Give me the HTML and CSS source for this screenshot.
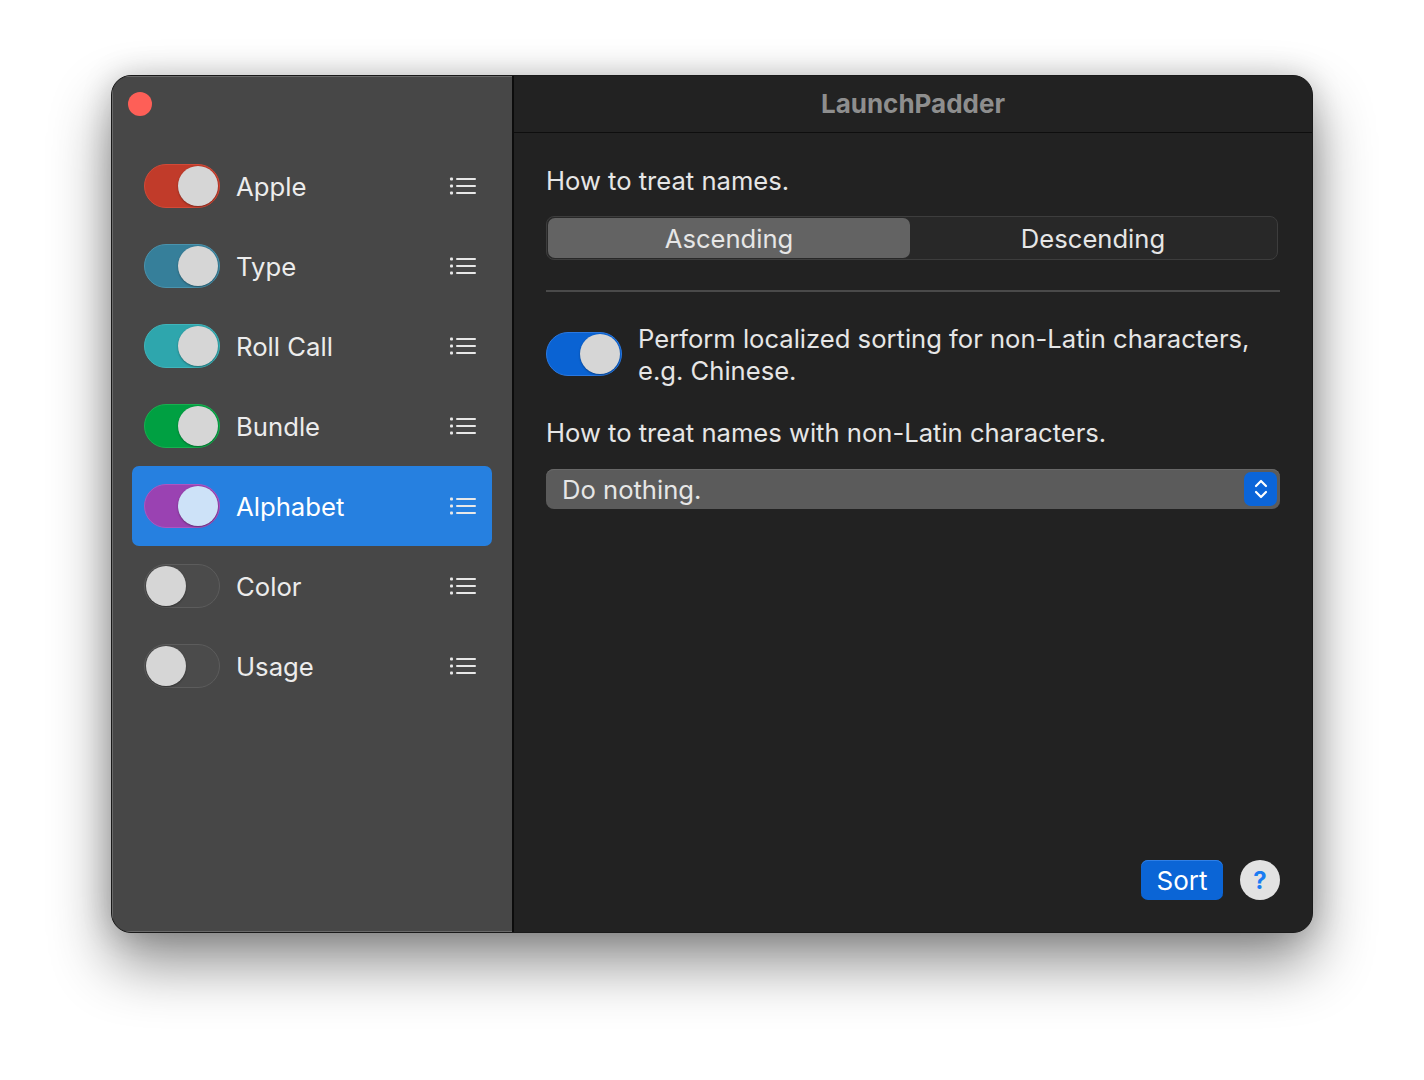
FILE: index.html
```html
<!DOCTYPE html>
<html>
<head>
<meta charset="utf-8">
<link rel="stylesheet" href="styles.css">
</head>
<body>
<div class="window">
  <aside class="sidebar">
    <div class="sidebar-top"><span class="close"></span></div>
    <div class="row">
      <span class="toggle on red"><span class="knob"></span></span>
      <span class="label">Apple</span>
      <svg class="list" viewBox="0 0 28 20"><g fill="currentColor"><rect x="1" y="1.5" width="3" height="3" rx="1"/><rect x="1" y="8.5" width="3" height="3" rx="1"/><rect x="1" y="15.5" width="3" height="3" rx="1"/><rect x="7" y="2" width="20" height="2" rx="1"/><rect x="7" y="9" width="20" height="2" rx="1"/><rect x="7" y="16" width="20" height="2" rx="1"/></g></svg>
    </div>
    <div class="row">
      <span class="toggle on teal"><span class="knob"></span></span>
      <span class="label">Type</span>
      <svg class="list" viewBox="0 0 28 20"><g fill="currentColor"><rect x="1" y="1.5" width="3" height="3" rx="1"/><rect x="1" y="8.5" width="3" height="3" rx="1"/><rect x="1" y="15.5" width="3" height="3" rx="1"/><rect x="7" y="2" width="20" height="2" rx="1"/><rect x="7" y="9" width="20" height="2" rx="1"/><rect x="7" y="16" width="20" height="2" rx="1"/></g></svg>
    </div>
    <div class="row">
      <span class="toggle on cyan"><span class="knob"></span></span>
      <span class="label">Roll Call</span>
      <svg class="list" viewBox="0 0 28 20"><g fill="currentColor"><rect x="1" y="1.5" width="3" height="3" rx="1"/><rect x="1" y="8.5" width="3" height="3" rx="1"/><rect x="1" y="15.5" width="3" height="3" rx="1"/><rect x="7" y="2" width="20" height="2" rx="1"/><rect x="7" y="9" width="20" height="2" rx="1"/><rect x="7" y="16" width="20" height="2" rx="1"/></g></svg>
    </div>
    <div class="row">
      <span class="toggle on green"><span class="knob"></span></span>
      <span class="label">Bundle</span>
      <svg class="list" viewBox="0 0 28 20"><g fill="currentColor"><rect x="1" y="1.5" width="3" height="3" rx="1"/><rect x="1" y="8.5" width="3" height="3" rx="1"/><rect x="1" y="15.5" width="3" height="3" rx="1"/><rect x="7" y="2" width="20" height="2" rx="1"/><rect x="7" y="9" width="20" height="2" rx="1"/><rect x="7" y="16" width="20" height="2" rx="1"/></g></svg>
    </div>
    <div class="row selected">
      <span class="toggle on purple"><span class="knob"></span></span>
      <span class="label">Alphabet</span>
      <svg class="list" viewBox="0 0 28 20"><g fill="currentColor"><rect x="1" y="1.5" width="3" height="3" rx="1"/><rect x="1" y="8.5" width="3" height="3" rx="1"/><rect x="1" y="15.5" width="3" height="3" rx="1"/><rect x="7" y="2" width="20" height="2" rx="1"/><rect x="7" y="9" width="20" height="2" rx="1"/><rect x="7" y="16" width="20" height="2" rx="1"/></g></svg>
    </div>
    <div class="row">
      <span class="toggle off"><span class="knob"></span></span>
      <span class="label">Color</span>
      <svg class="list" viewBox="0 0 28 20"><g fill="currentColor"><rect x="1" y="1.5" width="3" height="3" rx="1"/><rect x="1" y="8.5" width="3" height="3" rx="1"/><rect x="1" y="15.5" width="3" height="3" rx="1"/><rect x="7" y="2" width="20" height="2" rx="1"/><rect x="7" y="9" width="20" height="2" rx="1"/><rect x="7" y="16" width="20" height="2" rx="1"/></g></svg>
    </div>
    <div class="row">
      <span class="toggle off"><span class="knob"></span></span>
      <span class="label">Usage</span>
      <svg class="list" viewBox="0 0 28 20"><g fill="currentColor"><rect x="1" y="1.5" width="3" height="3" rx="1"/><rect x="1" y="8.5" width="3" height="3" rx="1"/><rect x="1" y="15.5" width="3" height="3" rx="1"/><rect x="7" y="2" width="20" height="2" rx="1"/><rect x="7" y="9" width="20" height="2" rx="1"/><rect x="7" y="16" width="20" height="2" rx="1"/></g></svg>
    </div>
  </aside>
  <main class="main">
    <header class="titlebar">LaunchPadder</header>
    <section class="content">
      <p class="text first">How to treat names.</p>
      <div class="segmented">
        <span class="seg active">Ascending</span>
        <span class="seg">Descending</span>
      </div>
      <hr class="sep">
      <div class="option">
        <span class="toggle on blue"><span class="knob"></span></span>
        <p class="text opt-text">Perform localized sorting for non-Latin characters,<br>e.g. Chinese.</p>
      </div>
      <p class="text second">How to treat names with non-Latin characters.</p>
      <div class="popup">
        <span class="popup-label">Do nothing.</span>
        <span class="stepper">
          <svg viewBox="0 0 16 24" width="16" height="24"><path d="M3 9 L8 4 L13 9 M3 15 L8 20 L13 15" fill="none" stroke="#fff" stroke-width="2.2" stroke-linecap="round" stroke-linejoin="round"/></svg>
        </span>
      </div>
      <div class="spacer"></div>
      <div class="actions">
        <button class="sort">Sort</button>
        <button class="help">?</button>
      </div>
    </section>
  </main>
</div>
</body>
</html>
```
FILE: styles.css
```css
* { box-sizing: border-box; }
html, body {
  margin: 0;
  padding: 0;
  background: #ffffff;
  width: 1424px;
  height: 1080px;
  overflow: hidden;
  font-family: Inter, "Liberation Sans", sans-serif;
}
.window {
  margin: 75px 0 0 111px;
  width: 1202px;
  height: 858px;
  border-radius: 20px;
  border: 1px solid #1a1a1a;
  box-shadow: 0 30px 60px rgba(0,0,0,0.45), 0 0 30px rgba(0,0,0,0.18);
  display: flex;
  overflow: hidden;
  background: #222222;
}
.sidebar {
  width: 402px;
  background: #474747;
  border-right: 2px solid #0c0c0c;
  padding: 0 20px;
  display: flex;
  flex-direction: column;
  box-shadow: inset 1px 1px 0 #6a6a6a, inset 0 -1px 0 #6a6a6a;
}
.sidebar-top {
  height: 70px;
  padding-top: 16px;
}
.close {
  display: block;
  width: 24px;
  height: 24px;
  border-radius: 50%;
  background: #fe5f57;
  margin-left: -4px;
}
.row {
  height: 80px;
  display: flex;
  align-items: center;
  padding: 0 15px 0 12px;
  border-radius: 7px;
  color: #ececec;
}
.row.selected {
  background: #2680e0;
  color: #ffffff;
}
.toggle {
  position: relative;
  flex: none;
  width: 76px;
  height: 44px;
  border-radius: 22px;
  border: 1px solid rgba(255,255,255,0.12);
}
.toggle .knob {
  position: absolute;
  top: 1px;
  width: 40px;
  height: 40px;
  border-radius: 50%;
  background: #d6d6d6;
  box-shadow: 0 1px 2px rgba(0,0,0,0.35);
}
.toggle.on .knob { right: 1px; }
.toggle.off .knob { left: 1px; }
.toggle.off { background: #4b4b4b; border-color: #5c5c5c; }
.toggle.red { background: #c13b2a; border-color: #d24a38; }
.toggle.teal { background: #367f9a; border-color: #4a93ad; }
.toggle.cyan { background: #2ea6ad; border-color: #40b5bb; }
.toggle.green { background: #00a042; border-color: #18b050; }
.toggle.purple { background: #9a42b2; border-color: #ab56c2; }
.toggle.purple .knob { background: #cde2f8; }
.toggle.blue { background: #0a63d3; border-color: #2a78e0; }
.label {
  margin-left: 16px;
  font-size: 25.7px;
  flex: 1;
}
.list {
  width: 28px;
  height: 20px;
  color: #e8e8e8;
  flex: none;
}
.main {
  flex: 1;
  display: flex;
  flex-direction: column;
  background: #222222;
}
.titlebar {
  height: 57px;
  border-bottom: 1px solid #0e0e0e;
  display: flex;
  align-items: center;
  justify-content: center;
  color: #8e8e8e;
  font-weight: 700;
  font-size: 26px;
  padding-bottom: 2px;
}
.content {
  flex: 1;
  padding: 32px 32px 31px 32px;
  display: flex;
  flex-direction: column;
}
.text {
  margin: 0;
  color: #e6e6e6;
  font-size: 25.6px;
  line-height: 32px;
}
.segmented {
  margin-top: 19px;
  margin-right: 2px;
  height: 44px;
  border-radius: 8px;
  background: #282828;
  border: 1px solid #3d3d3d;
  display: flex;
  padding: 1px;
}
.seg {
  flex: 1;
  display: flex;
  align-items: center;
  justify-content: center;
  color: #e6e6e6;
  font-size: 25.6px;
  border-radius: 7px;
}
.seg.active {
  background: #636363;
  flex: 0 0 362px;
}
.sep {
  margin: 30px 0 0 0;
  border: 0;
  height: 2px;
  background: #4a4a4a;
}
.option {
  margin-top: 39px;
  display: flex;
  align-items: flex-start;
}
.option .toggle { margin-top: 1px; }
.opt-text {
  margin-left: 16px;
  margin-top: -8px;
}
.second {
  margin-top: 30px;
}
.popup {
  margin-top: 20px;
  height: 40px;
  border-radius: 8px;
  background: #5b5b5b;
  display: flex;
  align-items: center;
  padding: 0 3px 0 16px;
  box-shadow: inset 0 1px 0 #686868;
}
.popup-label {
  flex: 1;
  color: #e6e6e6;
  font-size: 25.6px;
}
.stepper {
  width: 33px;
  height: 34px;
  border-radius: 7px;
  background: #0b65d9;
  display: flex;
  align-items: center;
  justify-content: center;
}
.spacer { flex: 1; }
.actions {
  display: flex;
  justify-content: flex-end;
  align-items: center;
  gap: 17px;
  margin-bottom: 1px;
}
.sort {
  width: 82px;
  height: 40px;
  border: 0;
  border-radius: 7px;
  background: #0b65d6;
  color: #ffffff;
  font-family: Inter, "Liberation Sans", sans-serif;
  font-size: 26px;
  padding: 0;
  box-shadow: inset 0 1px 0 #2f7fe6;
}
.help {
  width: 40px;
  height: 40px;
  border: 0;
  border-radius: 50%;
  background: #e2e2e2;
  color: #1a7cf2;
  font-family: Inter, "Liberation Sans", sans-serif;
  font-weight: 700;
  font-size: 24px;
  padding: 0;
}
```
